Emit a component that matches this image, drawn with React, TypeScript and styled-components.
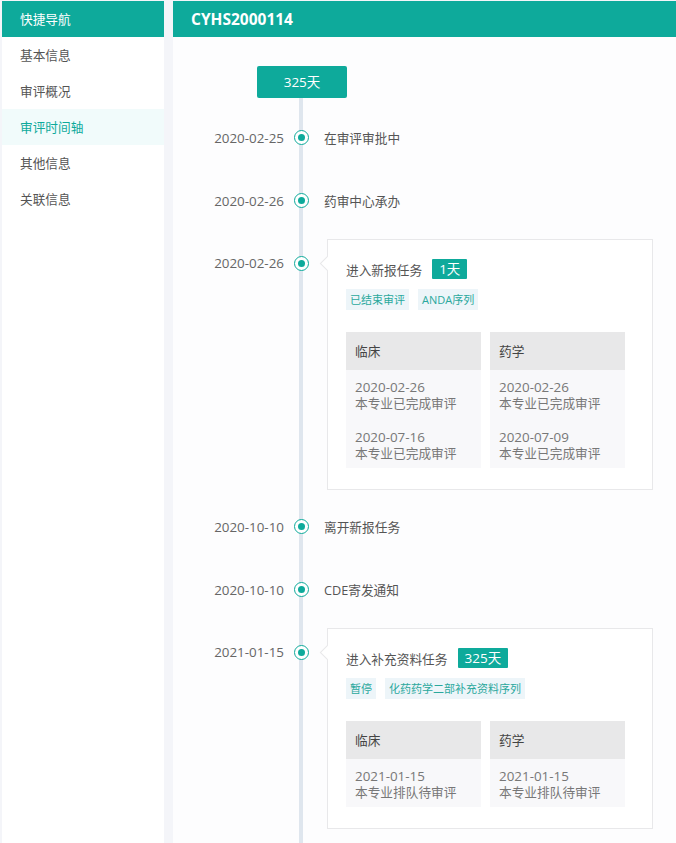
import React from "react";
import styled, { createGlobalStyle, css } from "styled-components";

const TEAL = "#0eaa9b";
const FONT = `"Open Sans", "Noto Sans CJK SC", sans-serif`;

const Global = createGlobalStyle`
  html, body { margin: 0; padding: 0; }
  body { background: #f4f5f9; font-family: ${FONT}; }
  #root { min-height: 100vh; }
`;

const Page = styled.div`
  display: flex;
  gap: 9px;
  padding: 1px 0 0 2px;
  min-height: 100vh;
  box-sizing: border-box;
`;

const Sidebar = styled.nav`
  width: 162px;
  flex: none;
  background: #ffffff;
  display: flex;
  flex-direction: column;
`;

const SideHead = styled.div`
  height: 36px;
  line-height: 36px;
  padding-left: 18px;
  background: ${TEAL};
  color: #fff;
  font-size: 12.7px;
`;

const SideItem = styled.div<{ $active?: boolean }>`
  height: 36px;
  line-height: 36px;
  padding-left: 18px;
  font-size: 12.7px;
  color: #555;
  ${(p) =>
    p.$active &&
    css`
      background: #f1fbfb;
      color: ${TEAL};
    `}
`;

const Main = styled.main`
  flex: 1;
  background: #fdfdfe;
  display: flex;
  flex-direction: column;
`;

const MainHead = styled.div`
  height: 36px;
  line-height: 36px;
  padding-left: 18px;
  background: ${TEAL};
  color: #fff;
  font-size: 15.5px;
  font-weight: 700;
`;

const Timeline = styled.div`
  position: relative;
  display: flex;
  flex-direction: column;
  padding-top: 29px;
  padding-bottom: 12px;
  flex: 1;
`;

const Axis = styled.div`
  position: absolute;
  left: 126px;
  top: 61px;
  bottom: 0;
  width: 4px;
  background: #dfe6ee;
`;

const Total = styled.div`
  position: relative;
  margin-left: 84px;
  width: 90px;
  height: 32px;
  line-height: 32px;
  text-align: center;
  background: ${TEAL};
  color: #fff;
  font-size: 13.5px;
  border-radius: 2px;
  margin-bottom: 8px;
`;

const Row = styled.div<{ $card?: boolean }>`
  position: relative;
  display: flex;
  align-items: ${(p) => (p.$card ? "flex-start" : "center")};
  ${(p) =>
    p.$card
      ? css`
          margin: 7px 0 5px;
        `
      : css`
          height: 63px;
        `}
`;

const DateCell = styled.div<{ $card?: boolean }>`
  width: 111px;
  text-align: right;
  font-size: 13.4px;
  color: #666;
  line-height: 20px;
  ${(p) => p.$card && css`margin-top: 14px;`}
`;

const DotCell = styled.div<{ $card?: boolean }>`
  width: 34px;
  height: 20px;
  display: flex;
  align-items: center;
  justify-content: center;
  ${(p) => p.$card && css`margin-top: 14px;`}
`;

const Dot = styled.span`
  width: 15px;
  height: 15px;
  box-sizing: border-box;
  border-radius: 50%;
  border: 1.5px solid ${TEAL};
  background: #fff;
  display: flex;
  align-items: center;
  justify-content: center;
  &::after {
    content: "";
    width: 7px;
    height: 7px;
    border-radius: 50%;
    background: ${TEAL};
  }
`;

const EventText = styled.div`
  margin-left: 6px;
  font-size: 12.7px;
  color: #555;
  line-height: 20px;
`;

const Card = styled.div`
  position: relative;
  margin-left: 9px;
  width: 326px;
  box-sizing: border-box;
  border: 1px solid #e8e8ea;
  background: #fff;
  padding: 19px 18px 21px 18px;
  &::before {
    content: "";
    position: absolute;
    left: -6px;
    top: 18px;
    width: 10px;
    height: 10px;
    background: #fff;
    border-left: 1px solid #e8e8ea;
    border-bottom: 1px solid #e8e8ea;
    transform: rotate(45deg);
  }
`;

const TitleRow = styled.div`
  display: flex;
  align-items: center;
  height: 20px;
  font-size: 12.7px;
  color: #555;
`;

const DaysBadge = styled.span`
  margin-left: 10px;
  height: 20px;
  line-height: 20px;
  padding: 0 7px;
  background: ${TEAL};
  color: #fff;
  font-size: 13.5px;
  border-radius: 1px;
`;

const Tags = styled.div`
  display: flex;
  gap: 9px;
  margin-top: 10px;
`;

const Tag = styled.span`
  height: 21px;
  line-height: 21px;
  padding: 0 4px;
  background: #edf5f9;
  color: #2aa89d;
  font-size: 11px;
`;

const Columns = styled.div`
  display: flex;
  gap: 9px;
  margin-top: 22px;
`;

const Column = styled.div`
  width: 135px;
  display: flex;
  flex-direction: column;
`;

const ColHead = styled.div`
  height: 38px;
  line-height: 38px;
  padding-left: 9px;
  background: #e8e8e9;
  color: #444;
  font-size: 12.7px;
`;

const ColBody = styled.div`
  background: #f8f8fa;
  padding: 9px 9px 7px;
  display: flex;
  flex-direction: column;
  gap: 18px;
`;

const Entry = styled.div`
  display: flex;
  flex-direction: column;
  color: #777;
`;

const EntryDate = styled.span`
  font-size: 13.4px;
  line-height: 16px;
`;

const EntryText = styled.span`
  font-size: 12.7px;
  line-height: 16px;
`;

type Col = { name: string; entries: [string, string][] };
type Ev =
  | { date: string; text: string }
  | { date: string; title: string; days: string; tags: string[]; cols: Col[] };

const events: Ev[] = [
  { date: "2020-02-25", text: "在审评审批中" },
  { date: "2020-02-26", text: "药审中心承办" },
  {
    date: "2020-02-26",
    title: "进入新报任务",
    days: "1天",
    tags: ["已结束审评", "ANDA序列"],
    cols: [
      {
        name: "临床",
        entries: [
          ["2020-02-26", "本专业已完成审评"],
          ["2020-07-16", "本专业已完成审评"],
        ],
      },
      {
        name: "药学",
        entries: [
          ["2020-02-26", "本专业已完成审评"],
          ["2020-07-09", "本专业已完成审评"],
        ],
      },
    ],
  },
  { date: "2020-10-10", text: "离开新报任务" },
  { date: "2020-10-10", text: "CDE寄发通知" },
  {
    date: "2021-01-15",
    title: "进入补充资料任务",
    days: "325天",
    tags: ["暂停", "化药药学二部补充资料序列"],
    cols: [
      { name: "临床", entries: [["2021-01-15", "本专业排队待审评"]] },
      { name: "药学", entries: [["2021-01-15", "本专业排队待审评"]] },
    ],
  },
];

const navItems = ["基本信息", "审评概况", "审评时间轴", "其他信息", "关联信息"];

export default function App() {
  return (
    <>
      <Global />
      <Page>
        <Sidebar>
          <SideHead>快捷导航</SideHead>
          {navItems.map((n) => (
            <SideItem key={n} $active={n === "审评时间轴"}>
              {n}
            </SideItem>
          ))}
        </Sidebar>
        <Main>
          <MainHead>CYHS2000114</MainHead>
          <Timeline>
            <Axis />
            <Total>325天</Total>
            {events.map((e, i) =>
              "text" in e ? (
                <Row key={i}>
                  <DateCell>{e.date}</DateCell>
                  <DotCell>
                    <Dot />
                  </DotCell>
                  <EventText>{e.text}</EventText>
                </Row>
              ) : (
                <Row key={i} $card>
                  <DateCell $card>{e.date}</DateCell>
                  <DotCell $card>
                    <Dot />
                  </DotCell>
                  <Card>
                    <TitleRow>
                      {e.title}
                      <DaysBadge>{e.days}</DaysBadge>
                    </TitleRow>
                    <Tags>
                      {e.tags.map((t) => (
                        <Tag key={t}>{t}</Tag>
                      ))}
                    </Tags>
                    <Columns>
                      {e.cols.map((c) => (
                        <Column key={c.name}>
                          <ColHead>{c.name}</ColHead>
                          <ColBody>
                            {c.entries.map(([d, s], j) => (
                              <Entry key={j}>
                                <EntryDate>{d}</EntryDate>
                                <EntryText>{s}</EntryText>
                              </Entry>
                            ))}
                          </ColBody>
                        </Column>
                      ))}
                    </Columns>
                  </Card>
                </Row>
              )
            )}
          </Timeline>
        </Main>
      </Page>
    </>
  );
}
